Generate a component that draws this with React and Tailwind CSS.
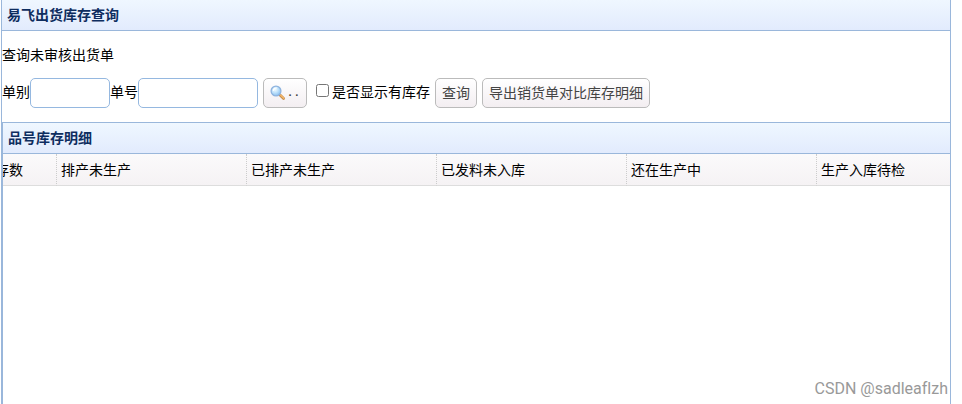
import React, { useState } from 'react';

const columns = ['排产未生产', '已排产未生产', '已发料未入库', '还在生产中', '生产入库待检'];

const buttonClass =
  'h-[30px] shrink-0 rounded-[5px] border border-[#bbbbbb] bg-linear-to-b from-white to-[#f3eef1] px-[6px] text-[#444444] hover:border-[#95b8e7]';
const textButtonClass = 'pb-[2px] leading-[26px]';
const inputClass =
  'h-[30px] rounded-[5px] border border-[#95b8e0] bg-white px-1 focus:outline-none focus:border-[#6b9cde]';
const labelClass = 'pb-1';

const PanelHeader = ({ children }) => (
  <h2 className="h-[31px] border-b border-[#9ab7db] bg-linear-to-b from-[#eff7ff] to-[#e2ebfd] px-[5px] text-[14px] font-bold leading-[28px] text-[#0e2d5f]">
    {children}
  </h2>
);

const SearchIcon = () => (
  <svg width="16" height="16" viewBox="0 0 16 16" aria-hidden="true">
    <defs>
      <radialGradient id="lens" cx="0.4" cy="0.35" r="0.65">
        <stop offset="0" stopColor="#f2fbff" />
        <stop offset="0.5" stopColor="#c0e2fb" />
        <stop offset="1" stopColor="#8bc1f0" />
      </radialGradient>
    </defs>
    <path d="M10 10 L13.6 13.6" stroke="#c48a4a" strokeWidth="2.8" strokeLinecap="round" />
    <path d="M10.5 9.9 L13.8 13.2" stroke="#f5b768" strokeWidth="1.4" strokeLinecap="round" />
    <circle cx="6" cy="6" r="4.9" fill="url(#lens)" stroke="#8fb3de" strokeWidth="1.3" />
    <path d="M3.4 5.4 A3 3 0 0 1 6.4 3" fill="none" stroke="#ffffff" strokeWidth="1.2" strokeLinecap="round" />
  </svg>
);

const App = () => {
  const [orderType, setOrderType] = useState('');
  const [orderNo, setOrderNo] = useState('');
  const [showStock, setShowStock] = useState(false);

  return (
    <div className="relative h-screen overflow-hidden bg-white pl-px pr-[11px] font-['Microsoft_YaHei','Noto_Sans_CJK_SC',sans-serif] text-[14px] leading-5 text-black">
      <div className="flex h-full flex-col border-x border-[#9ab7db]">
        <PanelHeader>易飞出货库存查询</PanelHeader>

        {/* Query form */}
        <div className="pb-[14px] pt-[13px]">
          <p>查询未审核出货单</p>
          <form className="mt-[14px] flex items-center whitespace-nowrap" onSubmit={(e) => e.preventDefault()}>
            <label htmlFor="orderType" className={labelClass}>单别</label>
            <input
              id="orderType"
              value={orderType}
              onChange={(e) => setOrderType(e.target.value)}
              className={`w-[80px] ${inputClass}`}
            />
            <label htmlFor="orderNo" className={labelClass}>单号</label>
            <input
              id="orderNo"
              value={orderNo}
              onChange={(e) => setOrderNo(e.target.value)}
              className={`w-[120px] ${inputClass}`}
            />
            <button type="button" className={`ml-[5px] flex w-[44px] items-center justify-between ${buttonClass}`}>
              <SearchIcon />
              <span className="font-['Liberation_Mono',monospace] text-[11px] font-bold">..</span>
            </button>
            <div className="ml-[9px] flex items-center gap-[3px]">
              <input
                id="showStock"
                type="checkbox"
                checked={showStock}
                onChange={(e) => setShowStock(e.target.checked)}
                className="mb-[5px] h-[13px] w-[13px]"
              />
              <label htmlFor="showStock" className={labelClass}>是否显示有库存</label>
            </div>
            <button type="submit" className={`ml-[5px] ${buttonClass} ${textButtonClass}`}>查询</button>
            <button type="button" className={`ml-[5px] ${buttonClass} ${textButtonClass}`}>导出销货单对比库存明细</button>
          </form>
        </div>

        {/* Stock detail grid */}
        <div className="min-h-0 flex-1 border-l border-t border-[#9ab7db]">
          <PanelHeader>品号库存明细</PanelHeader>
          <table className="w-full table-fixed border-separate border-spacing-0">
            <thead className="bg-linear-to-b from-[#fbfafb] to-[#f5f2f4]">
              <tr className="h-8">
                <th className="w-[54px] border-b border-r border-b-[#dddddd] border-r-[#cccccc] [border-right-style:dotted] px-0 pb-[2px] pt-0 font-normal">
                  {/* scrolled partly out of view on the left */}
                  <div className="flex w-5 justify-end overflow-hidden whitespace-nowrap">
                    <span>存数</span>
                  </div>
                </th>
                {columns.map((name, i) => (
                  <th
                    key={name}
                    className={`border-b border-b-[#dddddd] px-1 pb-[2px] pt-0 text-left font-normal whitespace-nowrap ${
                      i < columns.length - 1 ? 'w-[190px] border-r border-r-[#cccccc] [border-right-style:dotted]' : ''
                    }`}
                  >
                    {name}
                  </th>
                ))}
              </tr>
            </thead>
            <tbody />
          </table>
        </div>
      </div>

      <span className="absolute bottom-[5px] right-[14px] font-['Roboto',sans-serif] text-[16px] leading-5 text-[#999999] [font-variant-ligatures:none]">
        CSDN @sadleaflzh
      </span>
    </div>
  );
};

export default App;
